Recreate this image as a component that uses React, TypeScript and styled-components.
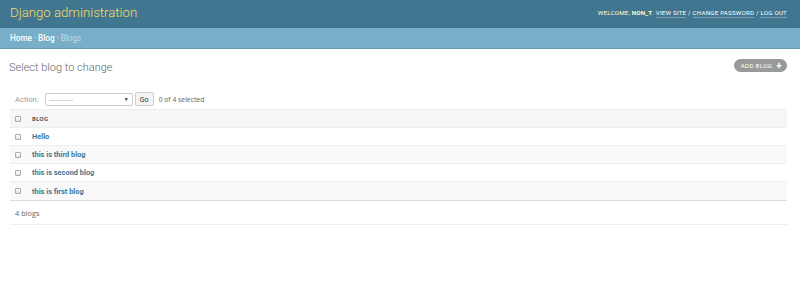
import React from "react";
import styled, { createGlobalStyle, css } from "styled-components";

interface IRowProps {
    alt?: boolean;
}

interface ICellProps {
    head?: boolean;
}

const GlobalStyle = createGlobalStyle`
    html, body {
        margin: 0;
        padding: 0;
        background: #fff;
        font-family: "Roboto", "Liberation Sans", sans-serif;
        color: #333;
    }
`;

const Header = styled.div`
    height: 28px;
    background: #417690;
    padding: 0 13px 0 10px;
    display: flex;
    align-items: center;
    justify-content: space-between;
    box-sizing: border-box;
`;

const Branding = styled.h1`
    margin: 0;
    font-size: 13.2px;
    font-weight: 300;
    color: #f5dd5d;
    line-height: 1;
    margin-top: -2px;
`;

const UserTools = styled.div`
    font-size: 6.2px;
    letter-spacing: 0.2px;
    text-transform: uppercase;
    color: #ffc;
    margin-top: -2px;

    strong {
        font-weight: 700;
    }
`;

const UserLink = styled.a`
    color: #fff;
    text-decoration: none;
    border-bottom: 1px solid rgba(255, 255, 255, 0.3);
`;

const Breadcrumbs = styled.div`
    height: 21px;
    background: #79aec8;
    border-bottom: 1px solid #6a9bb5;
    padding: 0 10px;
    display: flex;
    align-items: center;
    font-size: 8.2px;
    color: #c4dce8;
    box-sizing: border-box;
`;

const Crumb = styled.a`
    color: #fff;
    font-weight: 500;
    text-decoration: none;
`;

const Sep = styled.span`
    margin: 0 2px;
    font-size: 7px;
`;

const Content = styled.div`
    padding: 11px 13px 0 9px;
`;

const TitleRow = styled.div`
    display: flex;
    justify-content: space-between;
    align-items: flex-start;
`;

const PageTitle = styled.h1`
    margin: 1px 0 0;
    font-size: 11px;
    font-weight: 300;
    color: #666;
`;

const AddButton = styled.a`
    display: flex;
    align-items: center;
    gap: 4px;
    height: 13px;
    padding: 0 5px 0 7px;
    margin-top: -1px;
    border-radius: 7px;
    background: #999;
    color: #fff;
    font-size: 6.2px;
    letter-spacing: 0.3px;
    text-transform: uppercase;
    text-decoration: none;
`;

const Plus = styled.span`
    font-size: 10px;
    font-weight: 700;
    line-height: 1;
`;

const Actions = styled.div`
    margin: 15px 0 0 1px;
    padding: 0 0 0 5px;
    height: 20px;
    display: flex;
    align-items: center;
    font-size: 7.6px;
    color: #999;
    border-bottom: 1px solid #eee;
`;

const ActionLabel = styled.span`
    margin-right: 6px;
`;

const SelectBox = styled.div`
    width: 88px;
    height: 13px;
    border: 1px solid #ccc;
    border-radius: 2px;
    box-sizing: border-box;
    display: flex;
    align-items: center;
    justify-content: space-between;
    padding: 0 3px 0 4px;
    color: #555;
    font-size: 6px;
    letter-spacing: 1px;
`;

const Arrow = styled.span`
    font-size: 5px;
    color: #333;
    letter-spacing: 0;
`;

const GoButton = styled.button`
    margin-left: 2px;
    height: 14px;
    padding: 0 4px;
    border: 1px solid #ccc;
    border-radius: 2px;
    background: #f3f3f3;
    color: #333;
    font-family: "Roboto", sans-serif;
    font-size: 7.2px;
`;

const Counter = styled.span`
    margin-left: 5px;
    color: #666;
    font-family: "Open Sans", sans-serif;
    font-size: 6.8px;
`;

const Table = styled.div`
    margin-left: 1px;
    border-bottom: 1px solid #ddd;
`;

const Row = styled.div<IRowProps>`
    height: 18px;
    display: flex;
    align-items: center;
    border-bottom: 1px solid #eee;
    box-sizing: border-box;
    background: ${({ alt }) => (alt ? "#f9f9f9" : "#fff")};

    &:last-child {
        border-bottom: none;
    }
`;

const HeadRow = styled(Row)`
    background: #f6f6f6;
    border-bottom: 1px solid #eee;
`;

const Check = styled.span`
    width: 4px;
    height: 4px;
    margin: 0 11px 0 5px;
    border: 1px solid #aaa;
    border-radius: 1px;
    background: linear-gradient(#fff, #e6e6e6);
    flex-shrink: 0;
`;

const Cell = styled.span<ICellProps>`
    ${({ head }) =>
        head
            ? css`
                  font-family: "Open Sans", sans-serif;
                  font-size: 5.6px;
                  font-weight: 700;
                  color: #555;
                  text-transform: uppercase;
                  letter-spacing: 0.2px;
              `
            : css`
                  font-family: "Roboto", sans-serif;
                  font-size: 7.4px;
                  font-weight: 700;
                  color: #417893;
              `}
`;

const Paginator = styled.div`
    margin-left: 1px;
    height: 23px;
    display: flex;
    align-items: center;
    padding-left: 5px;
    font-family: "Open Sans", sans-serif;
    font-size: 7.4px;
    color: #666;
    border-bottom: 1px solid #eee;
`;

const blogs = ["Hello", "this is third blog", "this is second blog", "this is first blog"];

export default function App() {
    return (
        <>
            <GlobalStyle />
            <Header>
                <Branding>Django administration</Branding>
                <UserTools>
                    Welcome, <strong>non_t</strong>. <UserLink>View site</UserLink> /{" "}
                    <UserLink>Change password</UserLink> / <UserLink>Log out</UserLink>
                </UserTools>
            </Header>
            <Breadcrumbs>
                <Crumb>Home</Crumb>
                <Sep>›</Sep>
                <Crumb>Blog</Crumb>
                <Sep>›</Sep>
                Blogs
            </Breadcrumbs>
            <Content>
                <TitleRow>
                    <PageTitle>Select blog to change</PageTitle>
                    <AddButton>
                        Add blog <Plus>+</Plus>
                    </AddButton>
                </TitleRow>
                <Actions>
                    <ActionLabel>Action:</ActionLabel>
                    <SelectBox>
                        ---------
                        <Arrow>▼</Arrow>
                    </SelectBox>
                    <GoButton>Go</GoButton>
                    <Counter>0 of 4 selected</Counter>
                </Actions>
                <Table>
                    <HeadRow>
                        <Check />
                        <Cell head>Blog</Cell>
                    </HeadRow>
                    {blogs.map((b, i) => (
                        <Row key={b} alt={i % 2 === 1}>
                            <Check />
                            <Cell>{b}</Cell>
                        </Row>
                    ))}
                </Table>
                <Paginator>4 blogs</Paginator>
            </Content>
        </>
    );
}
